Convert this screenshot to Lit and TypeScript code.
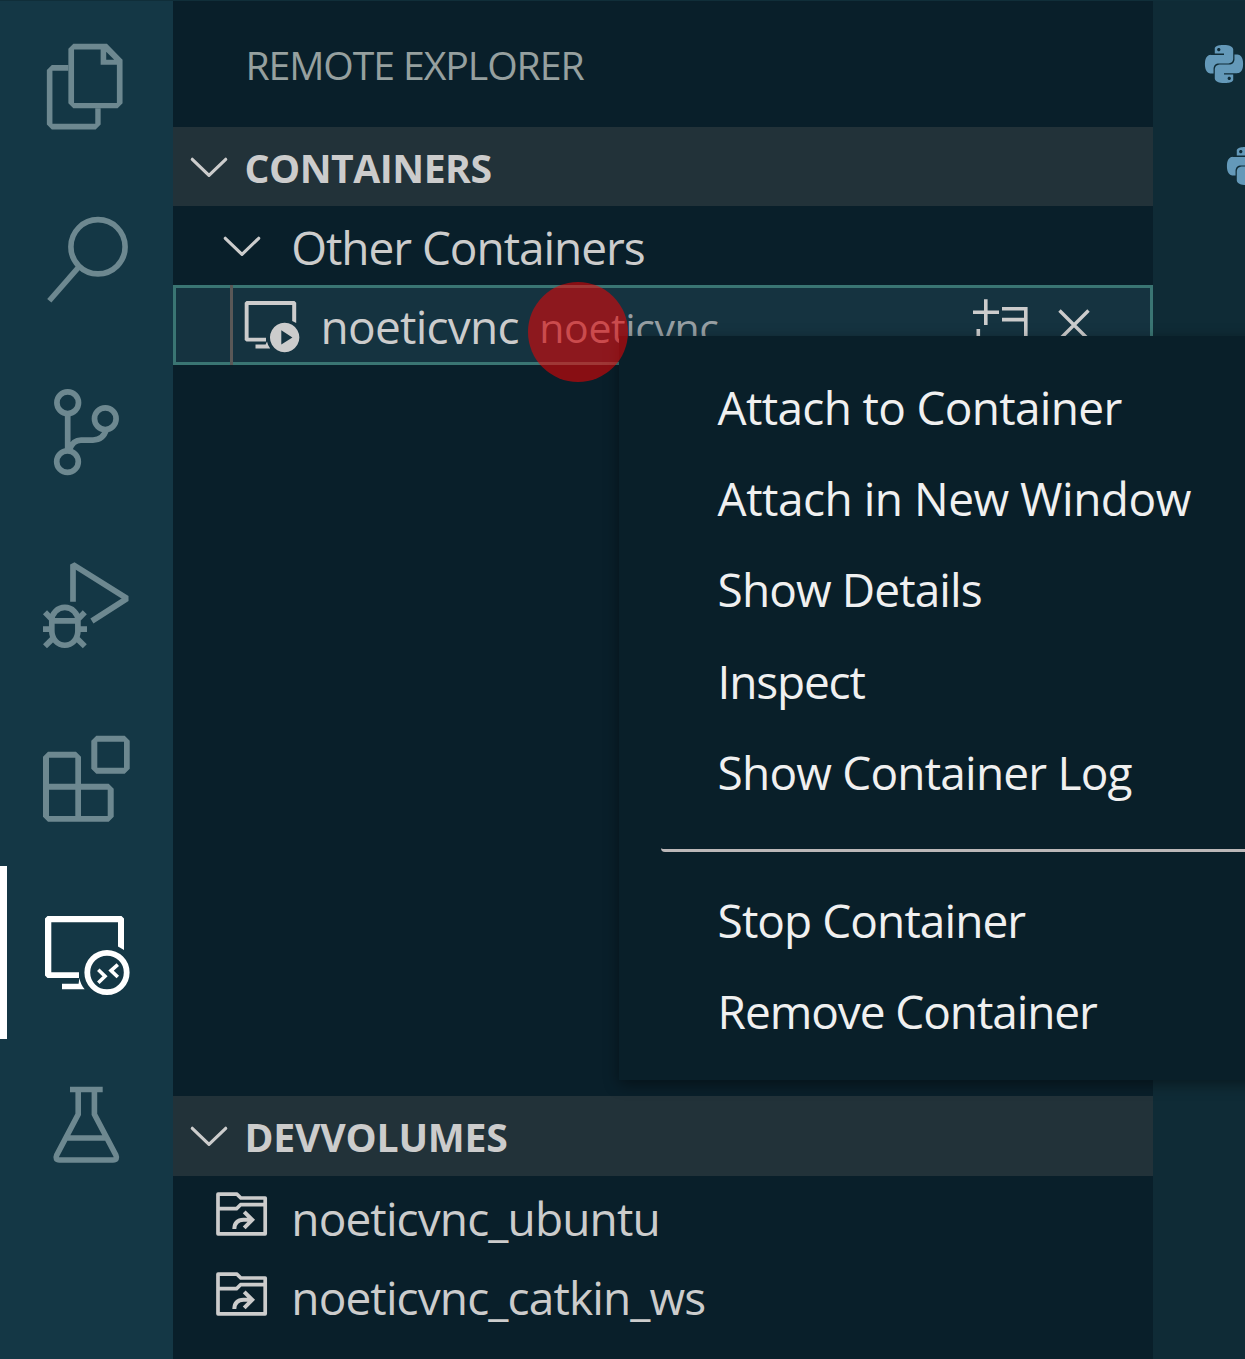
import { LitElement, html, svg, css, TemplateResult } from 'lit';
import { customElement, property } from 'lit/decorators.js';
import { classMap } from 'lit/directives/class-map.js';

const PYTHON =
  'M14.25.18l.9.2.73.26.59.3.45.32.34.34.25.34.16.33.1.3.04.26.02.2-.01.13V8.5l-.05.63-.13.55-.21.46-.26.38-.3.31-.33.25-.35.19-.35.14-.33.1-.3.07-.26.04-.21.02H8.77l-.69.05-.59.14-.5.22-.41.27-.33.32-.27.35-.2.36-.15.37-.1.35-.07.32-.04.27-.02.21v3.06H3.17l-.21-.03-.28-.07-.32-.12-.35-.18-.36-.26-.36-.36-.35-.46-.32-.59-.28-.73-.21-.88-.14-1.05-.05-1.23.06-1.22.16-1.04.24-.87.32-.71.36-.57.4-.44.42-.33.42-.24.4-.16.36-.1.32-.05.24-.01h.16l.06.01h8.16v-.83H6.18l-.01-2.75-.02-.37.05-.34.11-.31.17-.28.25-.26.31-.23.38-.2.44-.18.51-.15.58-.12.64-.1.71-.06.77-.04.84-.02 1.27.05zm-6.3 1.98l-.23.33-.08.41.08.41.23.34.33.22.41.09.41-.09.33-.22.23-.34.08-.41-.08-.41-.23-.33-.33-.22-.41-.09-.41.09zm13.09 3.95l.28.06.32.12.35.18.36.27.36.35.35.47.32.59.28.73.21.88.14 1.04.05 1.23-.06 1.23-.16 1.04-.24.86-.32.71-.36.57-.4.45-.42.33-.42.24-.4.16-.36.09-.32.05-.24.02-.16-.01h-8.22v.82h5.84l.01 2.76.02.36-.05.34-.11.31-.17.29-.25.25-.31.24-.38.2-.44.17-.51.15-.58.13-.64.09-.71.07-.77.04-.84.01-1.27-.04-1.07-.14-.9-.2-.73-.25-.59-.3-.45-.33-.34-.34-.25-.34-.16-.33-.1-.3-.04-.25-.02-.2.01-.13v-5.34l.05-.64.13-.54.21-.46.26-.38.3-.32.33-.24.35-.2.35-.14.33-.1.3-.06.26-.04.21-.02.13-.01h5.84l.69-.05.59-.14.5-.21.41-.28.33-.32.27-.35.2-.36.15-.36.1-.35.07-.32.04-.28.02-.21V6.07h2.09l.14.01zm-6.47 14.25l-.23.33-.08.41.08.41.23.33.33.23.41.08.41-.08.33-.23.23-.33.08-.41-.08-.41-.23-.33-.33-.23-.41-.08-.41.08z';

type Glyph = { box: string; art: TemplateResult };

const GLYPHS: Record<string, Glyph> = {
  files: {
    box: '0 1 173 172.33',
    art: svg`<path fill="currentColor" fill-rule="evenodd" d="M73.3 44H107L122.7 60V103.7L117.7 108.7H73.3L68.3 103.7V49ZM74 49.7V103.3H117V65H100.7V49.7ZM106.3 52V60H114.3Z"/>
      <path fill="currentColor" d="M68.3 65.3H51.7L46.7 70.3V125L51.7 130H95.7L100.7 125V108.7H95.3V124.3H52.3V71H68.3Z"/>`,
  },
  search: {
    box: '0 172.73 173 173.33',
    art: svg`<g fill="none" stroke="currentColor" stroke-width="5.6"><circle cx="98" cy="246.5" r="27.1"/><path d="M79 266.5L49.3 300.5"/></g>`,
  },
  branch: {
    box: '0 346.67 173 173.33',
    art: svg`<g fill="none" stroke="currentColor" stroke-width="5.7"><circle cx="67.7" cy="403.4" r="10.8"/><circle cx="105.3" cy="419.4" r="10.8"/><circle cx="67.5" cy="462.3" r="10.8"/><path d="M67.7 414V452M69.6 450Q73 440.7 81 440.7H93Q103.5 440.5 106.3 430"/></g>`,
  },
  debug: {
    box: '0 520 173 173.33',
    art: svg`<g fill="none" stroke="currentColor" stroke-width="5.7"><path stroke-linejoin="bevel" d="M73 602.8V565.6L127 599.5L91.9 622"/><path d="M51.8 632V621.5A12.9 12.9 0 0 1 77.9 621.5V632A13 14.2 0 0 1 51.8 632ZM52 621.9H78M43 630.1H51M79 630.1H87M45 613.2L52 620.4M84.8 613.2L77.8 620.4M45 647.2L53 639.4M84.8 647.2L76.8 639.4"/></g>`,
  },
  extensions: {
    box: '0 693.33 173 173.33',
    art: svg`<path fill="currentColor" fill-rule="evenodd" d="M48 752H76L81 757V784H108.7L113.7 789V817L108.7 822H48L43 817V757ZM49 758V784H75.3V758ZM49 790V816.3H75.3V790ZM81 790V816.3H107.7V790ZM96.3 736H124.7L129.7 741V769L124.7 774H96.3L91.3 769V741ZM97.3 742V768H124V742Z"/>`,
  },
  remote: {
    box: '0 866 173 173.33',
    art: svg`<path fill="currentColor" d="M47.5 916H121.5L124 918.5V950L118 946.5V922.3H51.3V972.3H79V978H47.5L45 975.5V918.5ZM62 983.7H78.6L79.4 978Q80.5 984.5 84.7 989.3H62Z"/>
      <g fill="none" stroke="currentColor"><circle cx="107" cy="972.5" r="19.7" stroke-width="5.8"/><path stroke-width="3.6" d="M98.3 969.8L105 976.2L98.3 982.7M117.8 964.6L111 970.6L117.8 977"/></g>`,
  },
  beaker: {
    box: '0 1039.33 173 173.33',
    art: svg`<g fill="none" stroke="currentColor" stroke-width="5.6"><path d="M70 1089.9H102.7M78.2 1090V1114.7L56.8 1155.3Q54.6 1160.3 59.5 1160.3H113Q118 1160.3 115.8 1155.3L94.4 1114.7V1090M66.5 1138.4H106"/></g>`,
  },
  chevron: {
    box: '0 0 38 22',
    art: svg`<path fill="none" stroke="currentColor" stroke-width="3.2" stroke-linecap="round" stroke-linejoin="round" d="M2.3 3.3L19 19.3L35.7 3.3"/>`,
  },
  running: {
    box: '244 301 56 53',
    art: svg`<path fill="currentColor" fill-rule="evenodd" d="M246.5 302H294.5L296.2 303.7V324L292.2 322V306H248.6V338.7H266V342.6H246.5L244.7 340.9V303.7ZM255.5 345.6H265.6L267 342.6Q267.8 346.6 270.2 349.6H255.5ZM284.7 323.8A14.7 14.7 0 1 1 284.6 323.8ZM281.3 331.2V345.5L292.4 338.4Z"/>`,
  },
  folder: {
    box: '215 1191 54 46',
    art: svg`<g fill="none" stroke="currentColor" stroke-width="3.7" stroke-linejoin="round"><path d="M218 1194.2H237L240.8 1198H265.2V1233.8H218ZM218 1208.7H236.5L240.5 1204.7H265.2"/><path stroke-width="4" stroke-linejoin="miter" d="M234.3 1229Q234.6 1220 243.5 1219.8H251M244.2 1211.8L252.2 1219.8L244.2 1227.8"/></g>`,
  },
  newWindow: {
    box: '972 298 58 54',
    art: svg`<g fill="none" stroke="currentColor" stroke-width="3.6"><path d="M973 312.3H999M985.8 299.3V325M1002 308.7H1025.8V350H978.3V329M1002 319.6H1024"/></g>`,
  },
  close: {
    box: '1057 308 34 34',
    art: svg`<path fill="none" stroke="currentColor" stroke-width="3.4" d="M1059.5 310.5L1088.5 339.5M1088.5 310.5L1059.5 339.5"/>`,
  },
  python: { box: '0 0 24 24', art: svg`<path fill="currentColor" fill-rule="evenodd" d=${PYTHON}/>` },
};

function glyph(name: string, cls = '') {
  const g = GLYPHS[name];
  return html`<svg class="glyph g-${name} ${cls}" viewBox=${g.box} aria-hidden="true">${g.art}</svg>`;
}

const glyphStyles = css`
  .glyph { display: block; flex: none; overflow: visible; }
  .g-chevron { width: 38px; height: 22px; }
  .g-running { width: 56px; height: 53px; }
  .g-folder { width: 54px; height: 46px; }
  .g-newWindow { width: 58px; height: 54px; }
  .g-close { width: 34px; height: 34px; }
  .g-python { width: 38px; height: 38px; }
`;

@customElement('activity-bar')
export class ActivityBar extends LitElement {
  static styles = [glyphStyles, css`
    :host { display: block; background: #143745; }
    .item { height: 173.33px; box-sizing: border-box; color: #6d8890; }
    .item:first-child { height: 171.67px; }
    .item .glyph { width: 173px; height: 100%; }
    .active { color: #fff; box-shadow: inset 7px 0 #fff; }
  `];
  render() {
    return ['files', 'search', 'branch', 'debug', 'extensions', 'remote', 'beaker'].map(
      (n) => html`<div class=${classMap({ item: true, active: n === 'remote' })}>${glyph(n)}</div>`,
    );
  }
}

@customElement('context-menu')
export class ContextMenu extends LitElement {
  @property({ attribute: false }) groups: [string, number][][] = [
    [['Attach to Container', -0.68], ['Attach in New Window', -0.5], ['Show Details', -0.9], ['Inspect', -1.2], ['Show Container Log', -0.8]],
    [['Stop Container', -0.93], ['Remove Container', -1.08]],
  ];
  static styles = css`
    :host { display: block; box-sizing: border-box; width: 670px; height: 744px; padding-top: 25.6px; background: #091f29; color: #f0f0f0; box-shadow: 0 4px 14px rgba(0, 0, 0, 0.42); }
    .item { height: 91.4px; line-height: 91.4px; padding-left: 98.6px; white-space: nowrap; }
    .rule { height: 5px; width: 587px; box-sizing: content-box; border-bottom: 3px solid #bbb7b8; border-radius: 7px; margin: 25.5px 0 22.6px 42px; }
  `;
  render() {
    return this.groups.map(
      (g, i) => html`${i ? html`<div class="rule"></div>` : ''}${g.map(
        ([t, s]) => html`<div class="item" style="letter-spacing:${s}px">${t}</div>`,
      )}`,
    );
  }
}

@customElement('app-root')
export class AppRoot extends LitElement {
  static styles = [glyphStyles, css`
    :host { display: block; position: relative; width: 1245px; height: 1359px; overflow: hidden; background: #0f2b36; font: 46px/79.4px 'Open Sans', 'Noto Sans', sans-serif; color: #ccc; }
    .strip { height: 1px; background: #102e39; }
    .frame { display: grid; grid-template-columns: 173px 980px 92px; height: 1358px; }
    .side { background: #091f2a; display: flex; flex-direction: column; white-space: nowrap; }
    .title { height: 126px; box-sizing: border-box; padding: 1px 0 0 72.4px; font-size: 39.2px; line-height: 126px; letter-spacing: -1.08px; color: #96a09f; }
    .section { flex: none; height: 79px; line-height: 79px; display: flex; align-items: center; background: #223239; font-size: 39.2px; font-weight: 700; padding-left: 17px; gap: 16.5px; letter-spacing: -0.49px; }
    .section span { padding-top: 2px; }
    .volumes-head { height: 80px; line-height: 80px; letter-spacing: -0.22px; }
    .tree { height: 890px; }
    .row { display: flex; align-items: center; height: 79.4px; box-sizing: border-box; }
    .group { height: 79px; padding-left: 49.5px; gap: 30.7px; letter-spacing: -1.04px; }
    .group span { padding-top: 4px; }
    .selected { height: 80px; background: #153340; box-shadow: inset 0 0 0 3px #3a7573; padding-right: 62px; letter-spacing: -0.74px; }
    .guide { width: 3px; height: 80px; background: #5a5857; margin: 0 11px 0 57px; }
    .g-running { margin-top: 3px; }
    .name { margin-left: 20.5px; padding-top: 4px; }
    .desc { font-size: 41px; letter-spacing: -0.38px; color: #979fa3; margin-left: 20.5px; padding-top: 6px; }
    .actions { margin-left: auto; display: flex; align-items: center; gap: 27px; }
    .volume { padding-left: 42px; gap: 22.3px; letter-spacing: -0.88px; }
    .volume span { padding-top: 5px; }
    .volume .glyph { margin-top: -3px; }
    .editor { display: flex; flex-direction: column; gap: 64px; padding: 43.5px 0 0 52px; color: #6499b9; }
    .nested { margin-left: 22px; }
    .menu { position: absolute; left: 619px; top: 336px; }
    .click { position: absolute; left: 528px; top: 282px; width: 100px; height: 100px; border-radius: 50%; background: rgba(250, 0, 0, 0.53); }
  `];
  render() {
    return html`
      <div class="strip"></div>
      <div class="frame">
        <activity-bar></activity-bar>
        <div class="side">
          <div class="title">REMOTE EXPLORER</div>
          <div class="section">${glyph('chevron')}<span>CONTAINERS</span></div>
          <div class="tree">
            <div class="row group">${glyph('chevron')}<span>Other Containers</span></div>
            <div class="row selected">
              <div class="guide"></div>
              ${glyph('running')}
              <span class="name">noeticvnc</span><span class="desc">noeticvnc</span>
              <div class="actions">${glyph('newWindow')}${glyph('close')}</div>
            </div>
          </div>
          <div class="section volumes-head">${glyph('chevron')}<span>DEVVOLUMES</span></div>
          <div class="row volume">${glyph('folder')}<span>noeticvnc_ubuntu</span></div>
          <div class="row volume">${glyph('folder')}<span>noeticvnc_catkin_ws</span></div>
        </div>
        <div class="editor">${glyph('python')}${glyph('python', 'nested')}</div>
      </div>
      <context-menu class="menu"></context-menu>
      <div class="click"></div>
    `;
  }
}
